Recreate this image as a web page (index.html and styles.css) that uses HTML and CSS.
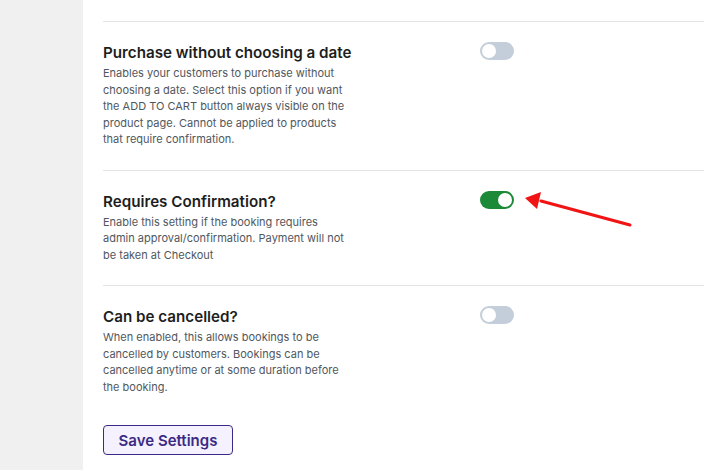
FILE: index.html
```html
<!DOCTYPE html>
<html lang="en">
<head>
  <meta charset="UTF-8" />
  <meta name="viewport" content="width=device-width, initial-scale=1.0"/>
  <title>Booking Settings</title>
  <link rel="stylesheet" href="styles.css">
</head>
<body>

  <div class="layout">
    <aside class="sidebar"></aside>

    <main class="panel">
      <div class="top-space"></div>

      <div class="setting">
        <div class="setting-text">
          <h3>Purchase without choosing a date</h3>
          <p>Enables your customers to purchase without choosing a date. Select this option if you want the ADD TO CART button always visible on the product page. Cannot be applied to products that require confirmation.</p>
        </div>
        <span class="toggle"></span>
      </div>

      <div class="setting">
        <div class="setting-text">
          <h3>Requires Confirmation?</h3>
          <p>Enable this setting if the booking requires admin approval/confirmation. Payment will not be taken at Checkout</p>
        </div>
        <span class="toggle on"></span>
      </div>

      <div class="setting last">
        <div class="setting-text">
          <h3>Can be cancelled?</h3>
          <p>When enabled, this allows bookings to be cancelled by customers. Bookings can be cancelled anytime or at some duration before the booking.</p>
        </div>
        <span class="toggle"></span>
      </div>

      <button class="save-btn">Save Settings</button>
    </main>
  </div>

  <!-- annotation arrow -->
  <svg class="arrow" width="120" height="40" viewBox="0 0 120 40">
    <line x1="109" y1="37" x2="20" y2="13" stroke="#f01414" stroke-width="3" stroke-linecap="round"/>
    <polygon points="4,10 20,4 16,21" fill="#f01414"/>
  </svg>

</body>
</html>
```

FILE: styles.css
```css
* { box-sizing: border-box; }
body {
  margin: 0; padding: 0;
  background: #fff;
  font-family: Inter, "Noto Sans", sans-serif;
  color: #1e1e1e;
  overflow: hidden;
  position: relative;
}
.layout {
  display: flex;
  min-height: 470px;
}
.sidebar {
  width: 83px; flex-shrink: 0;
  background: #f0f0f0;
}
.panel {
  flex: 1;
  padding-left: 20px;
  padding-bottom: 20px;
}
.top-space { height: 21px; }
.setting {
  display: grid;
  grid-template-columns: 377px 34px;
  border-top: 1px solid #e4e4e4;
  padding: 21px 0 22px;
}
.setting-text { max-width: 245px; }
.setting h3 {
  margin: 0;
  font-size: 15.2px; font-weight: 600;
  line-height: 20px;
  color: #1e1e1e;
  white-space: nowrap;
}
.setting p {
  margin: 2px 0 0;
  font-size: 11px;
  line-height: 16.5px;
  color: #50575e;
}
.toggle {
  position: relative;
  width: 34px; height: 18px;
  margin-top: -1px;
  border-radius: 9px;
  background: #c4cedb;
}
.toggle::after {
  content: "";
  position: absolute; top: 2px; left: 2px;
  width: 14px; height: 14px;
  border-radius: 50%;
  background: #fff;
}
.toggle.on { background: #1d8a38; }
.toggle.on::after { left: 18px; }
.save-btn {
  margin-top: 8px;
  width: 130px; height: 30px;
  background: #f5f1fe;
  border: 1px solid #3c2a86;
  border-radius: 4px;
  color: #3b2a84;
  font-family: Inter, "Noto Sans", sans-serif;
  font-size: 15px; font-weight: 600;
  cursor: pointer;
}
.arrow {
  position: absolute;
  left: 521px; top: 188px;
}
```
